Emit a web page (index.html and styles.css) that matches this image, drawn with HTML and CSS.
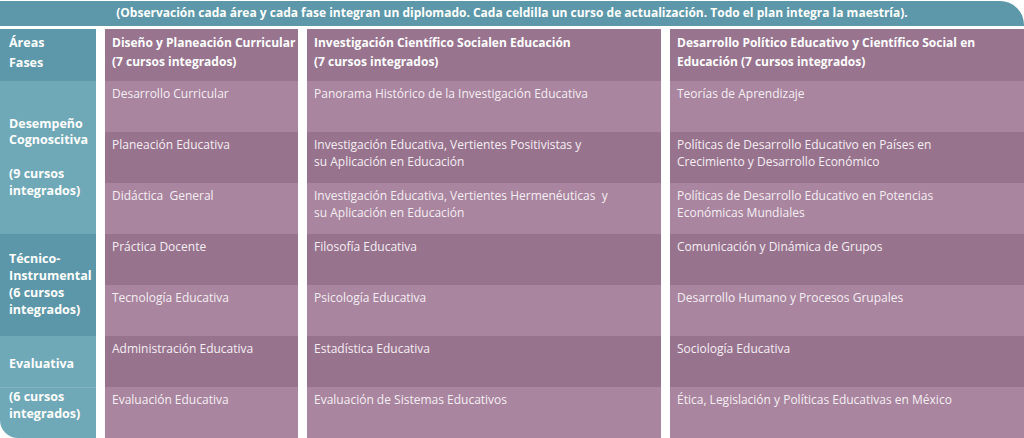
FILE: index.html
```html
<!DOCTYPE html>
<html lang="es">
<head>
<meta charset="utf-8">
<title>Plan de estudios</title>
<link rel="stylesheet" href="styles.css">
</head>
<body>
<div class="page">
  <div class="banner">(Observación cada área y cada fase integran un diplomado. Cada celdilla un curso de actualización. Todo el plan integra la maestría).</div>
  <div class="grid">
    <div class="side side-head"><span>Áreas</span><span>Fases</span></div>
    <div class="head">Diseño y Planeación Curricular<br>(7 cursos integrados)</div>
    <div class="head">Investigación Científico Socialen Educación<br>(7 cursos integrados)</div>
    <div class="head">Desarrollo Político Educativo y Científico Social en<br>Educación (7 cursos integrados)</div>

    <div class="side light span3 center">Desempeño<br>Cognoscitiva<br><br>(9 cursos<br>integrados)</div>
    <div class="cell light">Desarrollo Curricular</div>
    <div class="cell light">Panorama Histórico de la Investigación Educativa</div>
    <div class="cell light">Teorías de Aprendizaje</div>

    <div class="cell dark">Planeación Educativa</div>
    <div class="cell dark">Investigación Educativa, Vertientes Positivistas y<br>su Aplicación en Educación</div>
    <div class="cell dark">Políticas de Desarrollo Educativo en Países en<br>Crecimiento y Desarrollo Económico</div>

    <div class="cell light">Didáctica&nbsp; General</div>
    <div class="cell light">Investigación Educativa, Vertientes Hermenéuticas&nbsp; y<br>su Aplicación en Educación</div>
    <div class="cell light">Políticas de Desarrollo Educativo en Potencias<br>Económicas Mundiales</div>

    <div class="side dark span2 center">Técnico-<br>Instrumental<br>(6 cursos<br>integrados)</div>
    <div class="cell dark">Práctica Docente</div>
    <div class="cell dark">Filosofía Educativa</div>
    <div class="cell dark">Comunicación y Dinámica de Grupos</div>

    <div class="cell light">Tecnología Educativa</div>
    <div class="cell light">Psicología Educativa</div>
    <div class="cell light">Desarrollo Humano y Procesos Grupales</div>

    <div class="side light center eval">Evaluativa</div>
    <div class="cell dark">Administración Educativa</div>
    <div class="cell dark">Estadística Educativa</div>
    <div class="cell dark">Sociología Educativa</div>

    <div class="side light last">(6 cursos<br>integrados)</div>
    <div class="cell light">Evaluación Educativa</div>
    <div class="cell light">Evaluación de Sistemas Educativos</div>
    <div class="cell light">Ética, Legislación y Políticas Educativas en México</div>
  </div>
</div>
</body>
</html>
```

FILE: styles.css
```css
* { box-sizing: border-box; }
html, body { margin: 0; padding: 0; background: #ffffff; }
body {
  font-family: "Open Sans", "Noto Sans", "Liberation Sans", sans-serif;
  color: #f5eef3;
}
.page { width: 1024px; height: 438px; overflow: hidden; }

.banner {
  height: 25px;
  margin-top: 1px;
  background: #5c98a9;
  border-top-right-radius: 24px;
  font-weight: 700;
  font-size: 12px;
  line-height: 24px;
  text-align: center;
  color: #ffffff;
}

.grid {
  margin-top: 3px;
  display: grid;
  grid-template-columns: 96px 193px 354px 1fr;
  grid-template-rows: 52px repeat(7, 51px);
  column-gap: 9px;
}

.head {
  background: #98748f;
  font-weight: 700;
  font-size: 12px;
  line-height: 19px;
  padding: 4px 4px 0 7px;
  white-space: nowrap;
  color: #ffffff;
}

.cell {
  font-size: 12px;
  line-height: 16.5px;
  padding: 5px 4px 0 7px;
  white-space: nowrap;
}
.light { background: #a9859f; }
.dark { background: #98738e; }

.side {
  font-weight: 700;
  font-size: 12.5px;
  line-height: 16.8px;
  padding: 0 2px 0 9px;
  color: #ffffff;
}
.side.light { background: #6fa8b6; }
.side.dark { background: #5c97a9; }
.side-head {
  background: #5d98aa;
  display: flex;
  flex-direction: column;
  padding-top: 4px;
  line-height: 20px;
  font-size: 12.5px;
}
.span3 { grid-row: span 3; }
.span2 { grid-row: span 2; }
.center { display: flex; align-items: center; }
.eval { padding-top: 5px; }
.last {
  border-top: 1px solid #82b4c0;
  padding-top: 1px;
  border-bottom-left-radius: 18px;
}
```
